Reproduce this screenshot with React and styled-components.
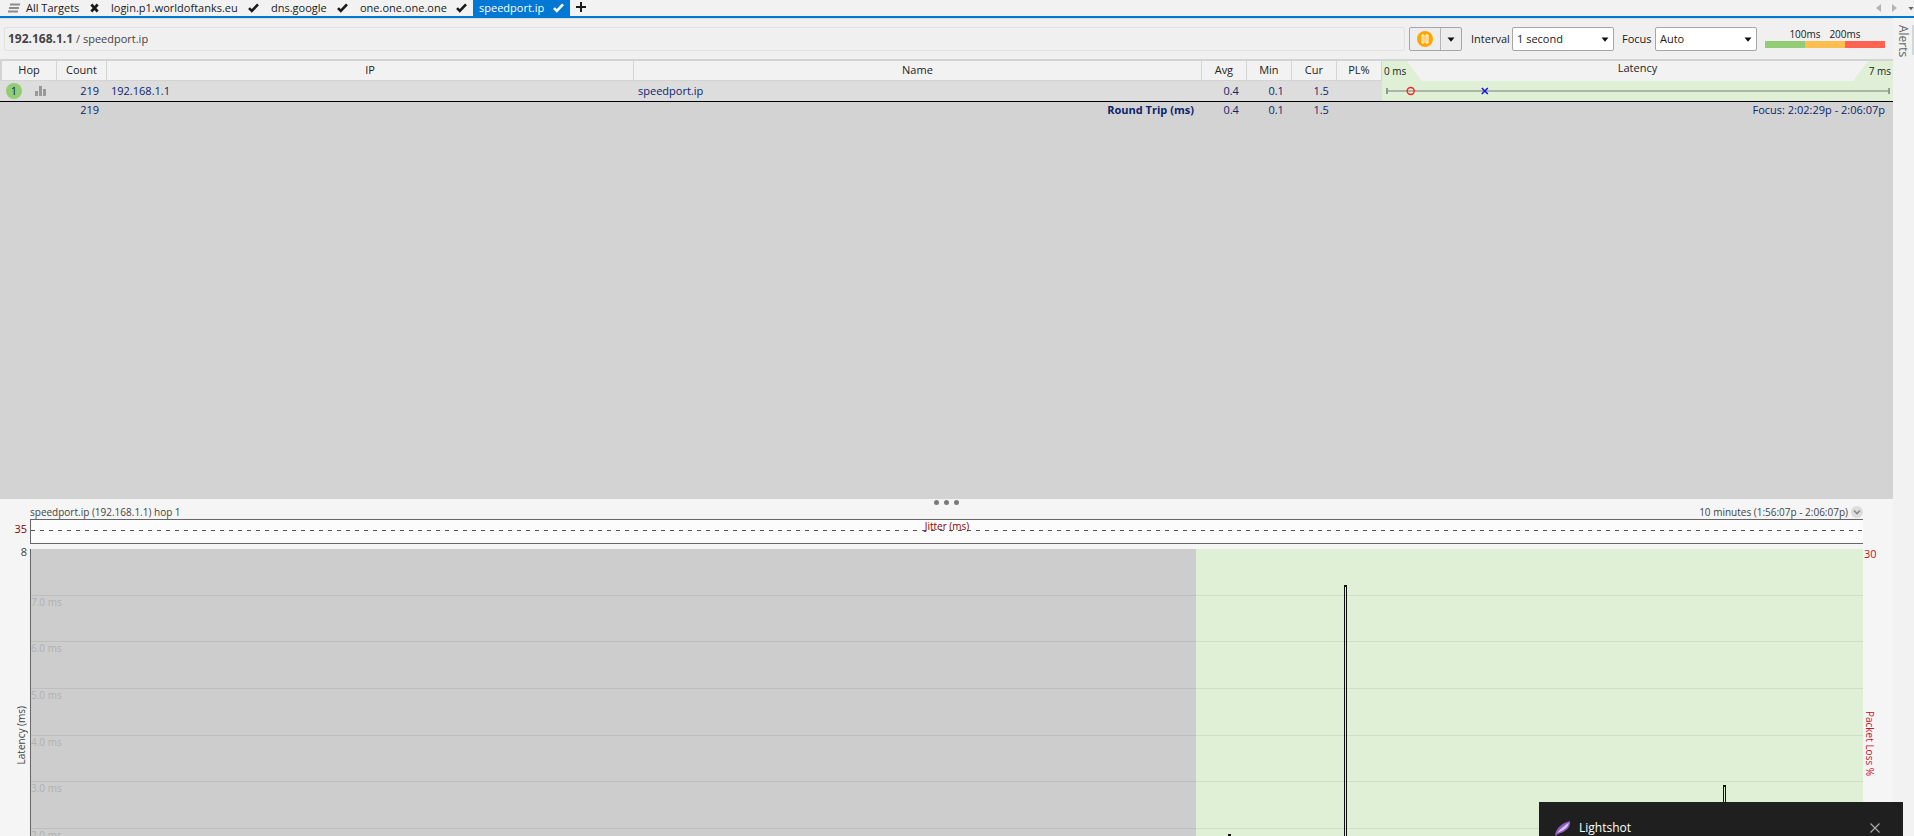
import React from "react";
import styled, { createGlobalStyle, css } from "styled-components";

const c = {
  blue: "#0078d4",
  navy: "#0b246e",
  panel: "#f0f0f0",
  grey: "#d3d3d3",
  green: "#dff0d6",
  axis: "#666666",
};

const GlobalStyle = createGlobalStyle`
  * { box-sizing: border-box; }
  body {
    margin: 0;
    overflow: hidden;
    font: 11px/16px "Segoe UI", "Open Sans", "Noto Sans", sans-serif;
    color: #1a1a1a;
    background: #f5f5f5;
  }
  button, select, input { font: inherit; color: inherit; }
`;

const Window = styled.div`
  display: flex;
  flex-direction: column;
  height: 100vh;
`;

/* tab strip */
const TabBar = styled.nav`
  display: flex;
  align-items: stretch;
  flex: none;
  height: 18px;
  padding-left: 8px;
  background: #f2f2f2;
  border-bottom: 2px solid ${c.blue};
`;
const Tab = styled.button`
  display: flex;
  align-items: center;
  justify-content: space-between;
  width: ${(p) => p.$w}px;
  padding: 0 6px;
  border: 0;
  background: ${(p) => (p.$active ? c.blue : "transparent")};
  color: ${(p) => (p.$active ? "#fff" : "#1a1a1a")};
  white-space: nowrap;
  text-align: left;
`;
const TabMenu = styled.button`
  display: flex;
  align-items: center;
  padding: 0;
  width: 12px;
  border: 0;
  background: none;
`;
const AddTab = styled(TabMenu)`
  width: 22px;
  padding: 0 0 2px;
  justify-content: center;
`;
const TabNav = styled.div`
  display: flex;
  align-items: center;
  gap: 10px;
  margin-left: auto;
`;
const NavButton = styled(TabMenu)`
  width: 6px;
`;

const Body = styled.div`
  display: flex;
  flex: 1;
  min-height: 0;
`;
const Main = styled.main`
  display: flex;
  flex-direction: column;
  flex: 1;
  min-width: 0;
`;
const SideStrip = styled.aside`
  width: 21px;
  padding-top: 7px;
  background: #f2f2f2;
`;
const AlertsTab = styled.button`
  writing-mode: vertical-rl;
  height: 30px;
  width: 21px;
  padding: 0;
  border: 0;
  border-right: 2px solid #d6d6d6;
  background: none;
  font-size: 12px;
  color: #666;
  text-align: left;
`;

/* toolbar */
const Toolbar = styled.div`
  display: flex;
  align-items: center;
  flex: none;
  height: 41px;
  padding: 0 8px 0 4px;
  border-top: 1px solid #dadada;
  background: ${c.panel};
`;
const Address = styled.div`
  flex: 1;
  height: 24px;
  padding: 3px;
  border: 1px solid #e2e2e2;
  border-radius: 2px;
  color: #444;
  b { font-size: 12px; }
`;
const PauseGroup = styled.div`
  display: flex;
  height: 24px;
  margin: 0 9px 0 4px;
  border: 1px solid #a6a6a6;
  border-radius: 2px;
  background: #ededed;
`;
const PauseButton = styled.button`
  display: flex;
  align-items: center;
  justify-content: center;
  width: ${(p) => p.$w}px;
  padding: 0;
  border: 0;
  background: none;
  & + & { border-left: 1px solid #b5b5b5; }
`;
const Field = styled.label`
  display: flex;
  align-items: center;
  justify-content: space-between;
  width: ${(p) => p.$w}px;
  margin-right: 8px;
`;
const SelectBox = styled.span`
  display: flex;
  align-items: center;
  width: 102px;
  height: 24px;
  padding-right: 4px;
  border: 1px solid #a6a6a6;
  border-radius: 2px;
  background: #fff;
`;
const Select = styled.select`
  flex: 1;
  min-width: 0;
  height: 22px;
  padding: 0 4px;
  border: 0;
  background: transparent;
  appearance: none;
`;
const Scale = styled.div`
  width: 120px;
  padding-bottom: 3px;
  font-size: 10px;
  line-height: 13px;
`;
const ScaleLabels = styled.div`
  display: grid;
  grid-template-columns: 20px 40px 40px 20px;
  text-align: center;
  span:first-child { grid-column: 2; }
`;
const ScaleBar = styled.div`
  height: 7px;
  background: linear-gradient(to right, #92cc74 0 33.3%, #ffbf50 33.3% 66.6%, #ff6450 66.6%);
`;

/* hop table */
const TablePane = styled.section`
  flex: none;
  height: 440px;
  border-top: 2px solid ${c.grey};
  background: ${c.grey};
`;
const Table = styled.table`
  width: 100%;
  table-layout: fixed;
  border-collapse: separate;
  border-spacing: 0;
  color: ${c.navy};
`;
const Col = styled.col`
  width: ${(p) => p.$w};
`;
const Th = styled.th`
  height: 20px;
  padding: 0 0 2px;
  border-left: ${(p) => (p.$first ? 2 : 0)}px solid ${c.grey};
  border-right: 1px solid ${c.grey};
  border-bottom: 1px solid ${c.grey};
  background: #f2f2f2;
  color: #222;
  font-weight: 400;
  line-height: 14px;
`;
const LatencyTh = styled(Th)`
  padding: 0;
  border: 0;
`;
const LatencyHead = styled.div`
  display: flex;
  justify-content: space-between;
  height: 20px;
`;
const Corner = styled.span`
  width: 40px;
  padding: 3px 2px 0;
  background: ${c.green};
  font-size: 10px;
  text-align: ${(p) => (p.$right ? "right" : "left")};
  clip-path: ${(p) =>
    p.$right
      ? "polygon(15px 0, 100% 0, 100% 100%, 0 100%)"
      : "polygon(0 0, 25px 0, 100% 100%, 0 100%)"};
`;
const Td = styled.td`
  height: ${(p) => (p.$total ? 16 : 21)}px;
  padding: 0 ${(p) => p.$pr || 8}px 0 4px;
  border-bottom: ${(p) => (p.$total ? "0" : "1px solid #000")};
  background: ${(p) => (p.$total ? c.grey : "#dddddd")};
  text-align: ${(p) => (p.$num ? "right" : "left")};
  font-weight: ${(p) => (p.$bold ? 700 : 400)};
`;
const LatencyTd = styled(Td)`
  padding: 0 3px 0 4px;
  background: ${c.green};
`;
const HopMarks = styled.div`
  display: flex;
  align-items: center;
  gap: 12px;
  padding-left: 2px;
`;
const HopNumber = styled.span`
  width: 16px;
  height: 16px;
  border-radius: 50%;
  background: #92cc74;
  line-height: 15px;
  text-align: center;
`;
const Range = styled.svg`
  display: block;
  width: 100%;
  height: 20px;
`;

/* graph pane */
const GraphPane = styled.section`
  flex: 1;
  min-height: 0;
  overflow: hidden;
  background: #f5f5f5;
`;
const Splitter = styled.div`
  display: flex;
  justify-content: center;
  align-items: center;
  gap: 5px;
  height: 6px;
`;
const Dot = styled.i`
  width: 5px;
  height: 5px;
  border-radius: 50%;
  background: #7a7a7a;
`;
const GraphTitle = styled.div`
  display: flex;
  justify-content: space-between;
  height: 14px;
  margin: 0 30px;
  font-size: 10px;
  line-height: 14px;
  color: #444;
`;
const Span = styled.span`
  display: flex;
  align-items: center;
  gap: 3px;
`;
const RoundButton = styled.button`
  display: flex;
  align-items: center;
  justify-content: center;
  width: 12px;
  height: 12px;
  padding: 0;
  border: 0;
  border-radius: 50%;
  background: #dcdcdc;
`;
const GraphGrid = styled.div`
  display: grid;
  grid-template-columns: 30px 1fr 30px;
  grid-template-rows: 25px 373px;
  row-gap: 5px;
`;
const JitterMax = styled.div`
  padding-right: 3px;
  line-height: 20px;
  text-align: right;
  color: #8b0000;
`;
const Axis = styled.div`
  grid-column: ${(p) => (p.$right ? 3 : 1)};
  display: grid;
  grid-template-rows: ${(p) => (p.$right ? "16px 1fr" : "16px 1fr 16px")};
  justify-items: ${(p) => (p.$right ? "start" : "end")};
  padding: ${(p) => (p.$right ? "0 1px" : "0 3px")};
  line-height: ${(p) => (p.$right ? 10 : 6)}px;
  color: ${(p) => (p.$right ? "#cc1020" : "#444")};
`;
const AxisName = styled.span`
  writing-mode: vertical-rl;
  align-self: center;
  font-size: 10px;
  line-height: 12px;
  ${(p) => p.$up && css`transform: rotate(180deg);`}
`;
const JitterBox = styled.div`
  grid-column: 2;
  height: 25px;
  border: solid ${c.axis};
  border-width: 1px 0 1px 1px;
  background:
    repeating-linear-gradient(to right, #555 0 4px, transparent 4px 9px) 0 10px / 100% 1px no-repeat,
    #fcfcfc;
  color: #8b0000;
  font-size: 10px;
  line-height: 12px;
  text-align: center;
`;
const Plot = styled.div`
  grid-column: 2;
  position: relative;
  display: grid;
  grid-template-rows: repeat(8, 1fr);
  border-left: 1px solid ${c.axis};
  background: linear-gradient(to right, #cdcdcd 63.6%, ${c.green} 63.6%);
  color: #b0b0b0;
  font-size: 10px;
`;
const Band = styled.div`
  line-height: 12px;
  border-bottom: 1px solid rgba(0, 0, 0, 0.07);
`;
const Spike = styled.div`
  position: absolute;
  bottom: 0;
  width: 3px;
  border: 1px solid #111;
  border-top-width: 2px;
`;

/* notification */
const Toast = styled.div`
  position: fixed;
  right: 11px;
  bottom: 0;
  display: flex;
  align-items: center;
  width: 364px;
  height: 34px;
  padding: 18px 23px 0 16px;
  gap: 8px;
  background: #1f1f1f;
  color: #fff;
  font-size: 12px;
`;
const CloseToast = styled.button`
  display: flex;
  margin-left: auto;
  padding: 0;
  border: 0;
  background: none;
`;

const Check = ({ color = "#1a1a1a" }) => (
  <svg width="11" height="10" viewBox="0 0 11 10" aria-hidden="true">
    <path d="M1 5.2 L3.8 8 L10 1.4" fill="none" stroke={color} strokeWidth="2.6" />
  </svg>
);
const Cross = () => (
  <svg width="9" height="10" viewBox="0 0 9 10" aria-hidden="true">
    <path d="M1.3 1.5 L7.7 8.5 M7.7 1.5 L1.3 8.5" stroke="#1a1a1a" strokeWidth="2.6" />
  </svg>
);
const Caret = ({ color = "#111" }) => (
  <svg width="8" height="5" viewBox="0 0 8 5" aria-hidden="true">
    <path d="M0.5 0.5 H7.5 L4 4.8 Z" fill={color} />
  </svg>
);

const TABS = [
  { name: "All Targets", w: 85 },
  { name: "login.p1.worldoftanks.eu", w: 160 },
  { name: "dns.google", w: 89 },
  { name: "one.one.one.one", w: 119 },
  { name: "speedport.ip", w: 97, active: true },
];
const COLS = ["57px", "50px", "27.84%", "auto", "45px", "45px", "45px", "45px", "27%"];
const HEADS = ["Hop", "Count", "IP", "Name", "Avg", "Min", "Cur", "PL%"];
const BANDS = ["", "7.0 ms", "6.0 ms", "5.0 ms", "4.0 ms", "3.0 ms", "2.0 ms", "1.0 ms"];
const SPIKES = [
  { at: 65.34, ms: 1.89 },
  { at: 71.67, ms: 7.23 },
  { at: 92.36, ms: 2.94 },
];

export default function App() {
  return (
    <Window>
      <GlobalStyle />
      <TabBar>
        <TabMenu aria-label="Target list">
          <svg width="12" height="10" viewBox="0 0 12 10">
            <path d="M2 1.5 H12 M1 5 H11 M0 8.5 H10" stroke="#8c8c8c" strokeWidth="2" />
          </svg>
        </TabMenu>
        {TABS.map((t, i) => (
          <Tab key={t.name} $w={t.w} $active={t.active}>
            {t.name}
            {i === 0 ? <Cross /> : <Check color={t.active ? "#fff" : undefined} />}
          </Tab>
        ))}
        <AddTab aria-label="New target">
          <svg width="10" height="10" viewBox="0 0 10 10">
            <path d="M5 0 V10 M0 5 H10" stroke="#1a1a1a" strokeWidth="2" />
          </svg>
        </AddTab>
        <TabNav>
          <NavButton aria-label="Previous">
            <svg width="5" height="8"><path d="M5 0 V8 L0 4 Z" fill="#b4b4b4" /></svg>
          </NavButton>
          <NavButton aria-label="Next">
            <svg width="5" height="8"><path d="M0 0 V8 L5 4 Z" fill="#b4b4b4" /></svg>
          </NavButton>
          <NavButton aria-label="All tabs"><Caret color="#666" /></NavButton>
        </TabNav>
      </TabBar>
      <Body>
        <Main>
          <Toolbar>
            <Address><b>192.168.1.1</b> / speedport.ip</Address>
            <PauseGroup>
              <PauseButton $w={30} aria-label="Pause">
                <svg width="16" height="16" viewBox="0 0 16 16">
                  <circle cx="8" cy="8" r="8" fill="#ffa500" />
                  <path d="M5 4 H7 V12 H5 Z M9 4 H11 V12 H9 Z" fill="#ffb52e" stroke="#fff" />
                </svg>
              </PauseButton>
              <PauseButton $w={21} aria-label="Pause options"><Caret /></PauseButton>
            </PauseGroup>
            <Field $w={143}>
              Interval
              <SelectBox><Select><option>1 second</option></Select><Caret /></SelectBox>
            </Field>
            <Field $w={135}>
              Focus
              <SelectBox><Select><option>Auto</option></Select><Caret /></SelectBox>
            </Field>
            <Scale>
              <ScaleLabels><span>100ms</span><span>200ms</span></ScaleLabels>
              <ScaleBar />
            </Scale>
          </Toolbar>
          <TablePane>
            <Table>
              <colgroup>{COLS.map((w, i) => <Col key={i} $w={w} />)}</colgroup>
              <thead>
                <tr>
                  {HEADS.map((h, i) => <Th key={h} $first={i === 0}>{h}</Th>)}
                  <LatencyTh>
                    <LatencyHead>
                      <Corner>0 ms</Corner>
                      Latency
                      <Corner $right>7 ms</Corner>
                    </LatencyHead>
                  </LatencyTh>
                </tr>
              </thead>
              <tbody>
                <tr>
                  <Td>
                    <HopMarks>
                      <HopNumber>1</HopNumber>
                      <svg width="13" height="12" viewBox="0 0 13 12" aria-hidden="true">
                        <path d="M1 6 H4 V11 H1 Z M5 1 H8 V11 H5 Z M9 4 H12 V11 H9 Z" fill="#999" />
                      </svg>
                    </HopMarks>
                  </Td>
                  <Td $num>219</Td>
                  <Td>192.168.1.1</Td>
                  <Td>speedport.ip</Td>
                  <Td $num>0.4</Td>
                  <Td $num>0.1</Td>
                  <Td $num>1.5</Td>
                  <Td />
                  <LatencyTd>
                    <Range>
                      <line x1="0" x2="100%" y1="10" y2="10" stroke="#adb5a8" strokeWidth="2" />
                      <rect x="0" y="7" width="2" height="6" fill="#8f998a" />
                      <svg x="100%" overflow="visible"><rect x="-2" y="7" width="2" height="6" fill="#8f998a" /></svg>
                      <svg x="4.9%" overflow="visible"><circle cy="10" r="3.5" fill="none" stroke="#f22" strokeWidth="1.4" /></svg>
                      <svg x="19.6%" overflow="visible"><path d="M-3 7 L3 13 M3 7 L-3 13" stroke="#1414e6" strokeWidth="1.5" /></svg>
                    </Range>
                  </LatencyTd>
                </tr>
                <tr>
                  <Td $total />
                  <Td $total $num>219</Td>
                  <Td $total />
                  <Td $total $num $bold>Round Trip (ms)</Td>
                  <Td $total $num>0.4</Td>
                  <Td $total $num>0.1</Td>
                  <Td $total $num>1.5</Td>
                  <Td $total />
                  <Td $total $num>Focus: 2:02:29p - 2:06:07p</Td>
                </tr>
              </tbody>
            </Table>
          </TablePane>
          <GraphPane>
            <Splitter><Dot /><Dot /><Dot /></Splitter>
            <GraphTitle>
              <span>speedport.ip (192.168.1.1) hop 1</span>
              <Span>
                10 minutes (1:56:07p - 2:06:07p)
                <RoundButton aria-label="Time span">
                  <svg width="8" height="6"><path d="M1 1.5 L4 4.5 L7 1.5" fill="none" stroke="#888" strokeWidth="1.6" /></svg>
                </RoundButton>
              </Span>
            </GraphTitle>
            <GraphGrid>
              <JitterMax>35</JitterMax>
              <JitterBox>Jitter (ms)</JitterBox>
              <Axis>
                <span>8</span>
                <AxisName $up>Latency (ms)</AxisName>
              </Axis>
              <Plot>
                {BANDS.map((b) => <Band key={b}>{b}</Band>)}
                {SPIKES.map((s) => (
                  <Spike key={s.at} style={{ left: `${s.at}%`, height: `${(s.ms / 8) * 100}%` }} />
                ))}
              </Plot>
              <Axis $right>
                <span>30</span>
                <AxisName>Packet Loss %</AxisName>
              </Axis>
            </GraphGrid>
          </GraphPane>
        </Main>
        <SideStrip><AlertsTab>Alerts</AlertsTab></SideStrip>
      </Body>
      <Toast role="status">
        <svg width="16" height="16" viewBox="0 0 16 16" aria-hidden="true">
          <path d="M0 15 C1 8 7 3 15 1 C16 7 11 12 3 14 L1 16 Z" fill="#8e5bc0" />
          <path d="M2 13 C5 9 9 6 14 2.5 C13 8 8 11 2 13 Z" fill="#d6c2ea" />
        </svg>
        Lightshot
        <CloseToast aria-label="Dismiss">
          <svg width="10" height="10"><path d="M0.5 0.5 L9.5 9.5 M9.5 0.5 L0.5 9.5" stroke="#aaa" strokeWidth="1.2" /></svg>
        </CloseToast>
      </Toast>
    </Window>
  );
}
